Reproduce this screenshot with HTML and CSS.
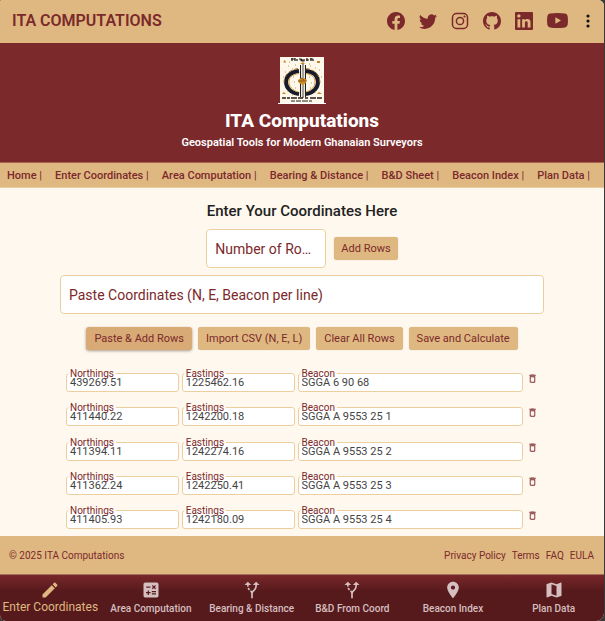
FILE: index.html
```html
<!DOCTYPE html>
<html lang="en">
<head>
<meta charset="utf-8">
<meta name="viewport" content="width=device-width, initial-scale=1">
<title>ITA Computations</title>
<link rel="stylesheet" href="styles.css">
</head>
<body>
<svg class="sprite" aria-hidden="true">
  <symbol id="trash" viewBox="0 0 24 24"><path d="M6 19c0 1.100.9 2 2 2h8c1.100 0 2-.9 2-2V7H6v12zM8 9h8v10H8V9zm7.500-5l-1-1h-5l-1 1H5v2h14V4h-3.500z"/></symbol>
  <symbol id="route" viewBox="0 0 24 24"><path d="m9.780 11.160-1.420 1.420c-.68-.69-1.340-1.580-1.790-2.940l1.940-.49c.32.89.77 1.500 1.270 2.010zM11 6 7 2 3 6h3.020c.02.81.08 1.540.19 2.170l1.940-.49C8.080 7.200 8.030 6.630 8.020 6H11zm10 0-4-4-4 4h2.990c-.1 3.680-1.280 4.750-2.540 5.880-.5.44-1.010.92-1.450 1.550-.34-.49-.73-.88-1.130-1.240L9.460 13.600c.93.85 1.540 1.540 1.540 3.400v5h2v-5c0-2.020.71-2.660 1.790-3.630 1.380-1.240 3.080-2.780 3.200-7.370H21z"/></symbol>
</svg>
<div class="app">
  <header class="topbar">
    <a class="brand" href="#">ITA COMPUTATIONS</a>
    <div class="social">
      <a href="#" aria-label="Facebook"><svg viewBox="0 0 16 16"><path d="M16 8.049c0-4.446-3.582-8.050-8-8.050C3.580 0-.002 3.603-.002 8.050c0 4.017 2.926 7.347 6.750 7.951v-5.625h-2.030V8.050H6.750V6.275c0-2.017 1.195-3.131 3.022-3.131.876 0 1.791.157 1.791.157v1.980h-1.009c-.993 0-1.303.621-1.303 1.258v1.510h2.218l-.354 2.326H9.250V16c3.824-.604 6.750-3.934 6.750-7.951"/></svg></a>
      <a href="#" aria-label="Twitter"><svg viewBox="0 0 16 16"><path d="M5.026 15c6.038 0 9.341-5.003 9.341-9.334q.002-.211-.006-.422A6.700 6.700 0 0 0 16 3.542a6.700 6.700 0 0 1-1.889.518 3.300 3.300 0 0 0 1.447-1.817 6.500 6.500 0 0 1-2.087.793A3.286 3.286 0 0 0 7.875 6.030a9.320 9.320 0 0 1-6.767-3.429 3.290 3.290 0 0 0 1.018 4.382A3.300 3.300 0 0 1 .64 6.575v.045a3.290 3.290 0 0 0 2.632 3.218 3.200 3.200 0 0 1-.865.115 3 3 0 0 1-.614-.057 3.280 3.280 0 0 0 3.067 2.277A6.600 6.600 0 0 1 .78 13.580a6 6 0 0 1-.78-.045A9.340 9.340 0 0 0 5.026 15"/></svg></a>
      <a href="#" aria-label="Instagram"><svg viewBox="0 0 18 18"><rect class="line" x="1.500" y="1.500" width="15" height="15" rx="4"/><circle class="line" cx="9" cy="9" r="3.600"/><circle cx="13.500" cy="4.500" r="1.100"/></svg></a>
      <a href="#" aria-label="GitHub"><svg viewBox="0 0 16 16"><path d="M8 0C3.580 0 0 3.580 0 8c0 3.540 2.290 6.530 5.470 7.590.4.070.55-.17.55-.38 0-.19-.01-.82-.01-1.490-2.010.37-2.530-.49-2.690-.94-.09-.23-.48-.94-.82-1.130-.28-.15-.68-.52-.01-.53.63-.01 1.080.58 1.230.82.72 1.210 1.870.87 2.330.66.07-.52.28-.87.51-1.070-1.780-.2-3.640-.89-3.640-3.950 0-.87.31-1.590.82-2.150-.08-.2-.36-1.020.08-2.120 0 0 .67-.21 2.200.82.64-.18 1.320-.27 2-.27s1.360.09 2 .27c1.530-1.040 2.200-.82 2.200-.82.44 1.100.16 1.920.08 2.120.51.56.82 1.270.82 2.150 0 3.070-1.870 3.750-3.650 3.950.29.25.54.73.54 1.480 0 1.070-.01 1.930-.01 2.200 0 .21.15.46.55.38A8.010 8.010 0 0 0 16 8c0-4.420-3.580-8-8-8"/></svg></a>
      <a href="#" aria-label="LinkedIn"><svg viewBox="3 3 18 18"><path fill-rule="evenodd" d="M20 3a1 1 0 0 1 1 1v16a1 1 0 0 1-1 1H4a1 1 0 0 1-1-1V4a1 1 0 0 1 1-1h16m-1.500 15.500v-5.300a3.260 3.260 0 0 0-3.260-3.260c-.85 0-1.840.52-2.320 1.300v-1.110h-2.790v8.370h2.790v-4.930c0-.77.62-1.400 1.390-1.400a1.400 1.400 0 0 1 1.400 1.400v4.930h2.790M6.880 8.560a1.680 1.680 0 0 0 1.680-1.680c0-.93-.75-1.690-1.680-1.690a1.690 1.690 0 0 0-1.690 1.690c0 .93.76 1.680 1.690 1.680m1.390 9.940v-8.370H5.500v8.370z"/></svg></a>
      <a class="wide" href="#" aria-label="YouTube"><svg viewBox="0 0 21 15"><path fill-rule="evenodd" d="M3 .6Q10.500-.6 18 .6q2.200.4 2.600 2.400.7 4.500 0 9-.4 2-2.600 2.400-7.500 1.200-15 0Q.8 14 .4 12q-.7-4.500 0-9Q.8 1 3 .6zM8.400 4.300v6.400l5.600-3.200z"/></svg></a>
    </div>
    <button class="more" type="button" aria-label="More options"><svg viewBox="0 0 4 14"><circle cx="2" cy="2" r="1.600"/><circle cx="2" cy="7" r="1.600"/><circle cx="2" cy="12" r="1.600"/></svg></button>
  </header>

  <section class="hero">
    <div class="logo">
      <svg viewBox="0 0 44 46" role="img" aria-label="Emblem">
        <rect width="44" height="46" fill="#fdf8ea"/>
        <path d="M12 1v3M11 2h4M15 1v3M17 2v2M19 2h2v2M22 2v2h2V2M26 3h3M27 1v3M30 2h3M31 1v3M33 2v2" stroke="#1b1815" stroke-width="1.200" fill="none"/>
        <g fill="none">
          <path d="M19 14C10 15 6 20 6 25s4 11 13 12" stroke="#171c2c" stroke-width="4"/>
          <path d="M26 14c9 1 12 6 12 11s-4 11-12 12" stroke="#171c2c" stroke-width="4"/>
          <path d="M19 16.500c-7 1-10 4-10 8.500s3 8 9 10" stroke="#d39a3c"/>
          <path d="M26 16.500c6 1 9 4 9 8.500s-3 8-9 10" stroke="#d39a3c"/>
          <path d="M18 11.500C8 13 4 19 4 26M26 11.500c10 1 14 8 14 15" stroke="#b37a28" stroke-dasharray="4 2"/>
          <path d="M20.500 8v32M25.500 8v32" stroke="#201d22"/>
          <path d="M23 7v34" stroke="#2b2730"/>
          <path d="M21.700 8v31M24.300 8v31" stroke="#efe6d2"/>
          <path d="M2 41h4m1 0h3m1 0h6m1 0h5m2 0h3m2 0h6m1 0h5" stroke="#25211c" stroke-width="1.500"/>
          <path d="M11 44h4m1 0h5m1 0h6m1 0h3" stroke="#25211c"/>
        </g>
        <path d="M18 23l3-2h3l3 2-1 3-3 2-4-2z" fill="#cf8d25"/>
        <path d="M18 24h8M21 21l3 2" stroke="#8a5618"/>
        <path d="M20 7h5l-2-2zM3 5l2-2 1 3zM37 4h3v2h-3zM2 37h4l-2-2zM37 37h5l-3-2z" fill="#c38629"/>
        <path d="M8 9h1M12 12h1M15 8h1M30 9h1M35 11h1M39 13h1M5 15h1M3 20h1M41 20h1M13 20h1M15 31h1M29 20h1M30 31h1M7 34h1M35 35h1M14 25h1M31 26h1M9 5h1M29 7h1M12 38h1" stroke="#c79a50"/>
      </svg>
    </div>
    <h1>ITA Computations</h1>
    <p>Geospatial Tools for Modern Ghanaian Surveyors</p>
  </section>

  <nav class="links" aria-label="Sections">
    <a href="#">Home <span>|</span></a>
    <a href="#">Enter Coordinates <span>|</span></a>
    <a href="#">Area Computation <span>|</span></a>
    <a href="#">Bearing &amp; Distance <span>|</span></a>
    <a href="#">B&amp;D Sheet <span>|</span></a>
    <a href="#">Beacon Index <span>|</span></a>
    <a href="#">Plan Data <span>|</span></a>
  </nav>

  <main>
    <h2>Enter Your Coordinates Here</h2>
    <div class="add">
      <input class="box count" type="text" aria-label="Number of Rows" placeholder="Number of Rows to add">
      <button class="btn" type="button">Add Rows</button>
    </div>
    <input class="box paste" type="text" aria-label="Paste Coordinates" placeholder="Paste Coordinates (N, E, Beacon per line)">
    <div class="actions">
      <button class="btn active" type="button">Paste &amp; Add Rows</button>
      <button class="btn" type="button">Import CSV (N, E, L)</button>
      <button class="btn" type="button">Clear All Rows</button>
      <button class="btn" type="button">Save and Calculate</button>
    </div>
    <div class="rows">
      <div class="row">
        <div class="field"><label for="n1">Northings</label><input id="n1" value="439269.51"></div>
        <div class="field"><label for="e1">Eastings</label><input id="e1" value="1225462.16"></div>
        <div class="field"><label for="b1">Beacon</label><input id="b1" value="SGGA 6 90 68"></div>
        <button class="del" type="button" aria-label="Delete row"><svg><use href="#trash"/></svg></button>
      </div>
      <div class="row">
        <div class="field"><label for="n2">Northings</label><input id="n2" value="411440.22"></div>
        <div class="field"><label for="e2">Eastings</label><input id="e2" value="1242200.18"></div>
        <div class="field"><label for="b2">Beacon</label><input id="b2" value="SGGA A 9553 25 1"></div>
        <button class="del" type="button" aria-label="Delete row"><svg><use href="#trash"/></svg></button>
      </div>
      <div class="row">
        <div class="field"><label for="n3">Northings</label><input id="n3" value="411394.11"></div>
        <div class="field"><label for="e3">Eastings</label><input id="e3" value="1242274.16"></div>
        <div class="field"><label for="b3">Beacon</label><input id="b3" value="SGGA A 9553 25 2"></div>
        <button class="del" type="button" aria-label="Delete row"><svg><use href="#trash"/></svg></button>
      </div>
      <div class="row">
        <div class="field"><label for="n4">Northings</label><input id="n4" value="411362.24"></div>
        <div class="field"><label for="e4">Eastings</label><input id="e4" value="1242250.41"></div>
        <div class="field"><label for="b4">Beacon</label><input id="b4" value="SGGA A 9553 25 3"></div>
        <button class="del" type="button" aria-label="Delete row"><svg><use href="#trash"/></svg></button>
      </div>
      <div class="row">
        <div class="field"><label for="n5">Northings</label><input id="n5" value="411405.93"></div>
        <div class="field"><label for="e5">Eastings</label><input id="e5" value="1242180.09"></div>
        <div class="field"><label for="b5">Beacon</label><input id="b5" value="SGGA A 9553 25 4"></div>
        <button class="del" type="button" aria-label="Delete row"><svg><use href="#trash"/></svg></button>
      </div>
    </div>
  </main>

  <footer>
    <span>© 2025 ITA Computations</span>
    <div class="legal"><a href="#">Privacy Policy</a><a href="#">Terms</a><a href="#">FAQ</a><a href="#">EULA</a></div>
  </footer>

  <nav class="tabs" aria-label="Main">
    <a class="current" href="#"><svg viewBox="0 0 24 24"><path d="M3 17.250V21h3.750L17.810 9.940l-3.750-3.750L3 17.250zM20.710 7.040c.39-.39.39-1.020 0-1.410l-2.340-2.340c-.39-.39-1.020-.39-1.410 0l-1.830 1.830 3.750 3.750 1.830-1.830z"/></svg><span>Enter Coordinates</span></a>
    <a href="#"><svg viewBox="0 0 24 24"><path fill-rule="evenodd" d="M5 3h14a2 2 0 0 1 2 2v14a2 2 0 0 1-2 2H5a2 2 0 0 1-2-2V5a2 2 0 0 1 2-2zM6.250 7.720v1.500h5v-1.500zM13 15.750v1.500h5v-1.500zm0-2.500v1.500h5v-1.500zM8 18h1.500v-2h2v-1.500h-2v-2H8v2H6V16h2zM14.090 10.950l1.410-1.410 1.410 1.410 1.060-1.060-1.410-1.420 1.410-1.410L16.910 6 15.500 7.410 14.090 6l-1.060 1.060 1.410 1.410-1.410 1.420z"/></svg><span>Area Computation</span></a>
    <a href="#"><svg><use href="#route"/></svg><span>Bearing &amp; Distance</span></a>
    <a href="#"><svg><use href="#route"/></svg><span>B&amp;D From Coord</span></a>
    <a href="#"><svg viewBox="0 0 24 24"><path d="M12 2C8.130 2 5 5.130 5 9c0 5.250 7 13 7 13s7-7.750 7-13c0-3.870-3.130-7-7-7zm0 9.500c-1.380 0-2.500-1.120-2.500-2.500s1.120-2.500 2.500-2.500 2.500 1.120 2.500 2.500-1.120 2.500-2.500 2.500z"/></svg><span>Beacon Index</span></a>
    <a href="#"><svg viewBox="0 0 24 24"><path d="M20.500 3l-.16.03L15 5.100 9 3 3.360 4.900c-.21.07-.36.25-.36.48V20.500c0 .28.22.5.5.5l.16-.03L9 18.900l6 2.100 5.640-1.900c.21-.07.36-.25.36-.48V3.500c0-.28-.22-.5-.5-.5zM15 19l-6-2.110V5l6 2.110V19z"/></svg><span>Plan Data</span></a>
  </nav>
</div>
</body>
</html>
```
FILE: styles.css
```css
:root {
  --maroon: #7b292b;
  --tan: #dfb881;
  --cream: #fff8ee;
  --outline: #edcf9f;
}
* { box-sizing: border-box; }
body {
  margin: 0;
  background: #3c3837;
  color: var(--maroon);
  font-family: Roboto, "Liberation Sans", sans-serif;
}
a { color: inherit; text-decoration: none; }
button, input { font: inherit; color: inherit; }
button { cursor: pointer; }
svg { display: block; fill: currentColor; }
.sprite { position: absolute; width: 0; height: 0; }

.app {
  display: flex;
  flex-direction: column;
  min-height: 100vh;
  margin-right: 1px;
  border-radius: 2px 6px 8px 6px;
  overflow: hidden;
  background: var(--cream);
}

.topbar {
  display: flex;
  align-items: center;
  height: 43px;
  padding: 0 12px 2px;
  background: var(--tan);
}
.brand { flex: 1; font-size: 16px; font-weight: 600; }
.social { display: flex; align-items: center; gap: 14px; }
.social svg { width: 18px; height: 18px; }
.social .wide svg { width: 21px; height: 15px; }
.line { fill: none; stroke: currentColor; stroke-width: 1.5; }
.more { margin-left: 16px; padding: 0 2px; border: 0; background: none; color: #111; }
.more svg { width: 4px; height: 14px; }

.hero {
  display: flex;
  flex-direction: column;
  align-items: center;
  height: 119px;
  padding-top: 14px;
  background: var(--maroon);
  color: #fff;
}
.logo { padding: 0 2px; border-bottom: 1px solid #fff; }
.logo svg { width: 44px; height: 46px; }
h1 { margin: 6px 0 0; font-size: 19px; line-height: 22px; font-weight: 800; }
.hero p { margin: 4px 0 0; font-size: 11px; line-height: 14px; font-weight: 600; }

.links {
  display: flex;
  justify-content: space-between;
  align-items: center;
  height: 26px;
  padding: 0 14px 0 7px;
  border-top: 1px solid #a9614c;
  border-bottom: 1px solid #e8cda2;
  background: var(--tan);
  font-size: 11px;
  font-weight: 500;
  white-space: nowrap;
}
.links span { font-weight: 400; }

main {
  flex: 1;
  display: flex;
  flex-direction: column;
  align-items: center;
  padding: 14px 60px 0;
}
h2 { margin: 0; font-size: 15px; line-height: 18px; font-weight: 500; color: #222; }
.add { display: flex; align-items: center; gap: 8px; margin-top: 9px; }
.box {
  height: 39px;
  padding: 0 8px;
  border: 1px solid var(--outline);
  border-radius: 4px;
  background: #fff;
  font-size: 14px;
  text-overflow: ellipsis;
}
.box::placeholder { color: var(--maroon); opacity: 1; }
.count { width: 120px; }
.paste { width: 100%; margin-top: 7px; }
.btn {
  height: 23px;
  padding: 0 7px;
  border: 0;
  border-radius: 3px;
  background: var(--tan);
  box-shadow: 0 0 1px #c9ad8d;
  font-size: 11px;
  white-space: nowrap;
}
.btn.active { background: #d8aa76; box-shadow: 0 1px 3px #a79a8b; }
.actions { display: flex; gap: 6px; margin-top: 13px; }
.actions .btn { padding: 0 8px; }

.rows {
  flex: 1;
  display: flex;
  flex-direction: column;
  justify-content: space-between;
  gap: 14px;
  width: 100%;
  padding: 23px 6px 7px;
}
.row { display: grid; grid-template-columns: 1fr 1fr 2fr 12px; gap: 3px; align-items: center; }
.field { position: relative; }
.field input {
  display: block;
  width: 100%;
  height: 19px;
  padding: 0 3px;
  border: 1px solid var(--outline);
  border-radius: 3px;
  background: #fff;
  color: #444;
  font-size: 11px;
}
.field label {
  position: absolute;
  left: 2px;
  top: -5px;
  padding: 0 2px;
  background: linear-gradient(var(--cream), var(--cream)) 0 5px / 100% 1px no-repeat;
  font-size: 10px;
  line-height: 12px;
}
.del { display: flex; justify-content: center; padding: 0 0 8px; border: 0; background: none; }
.del svg { width: 11px; height: 11px; }

footer {
  display: flex;
  justify-content: space-between;
  align-items: center;
  height: 38px;
  padding: 0 10px 0 9px;
  background: var(--tan);
  font-size: 10px;
}
.legal { display: flex; gap: 6px; }

.tabs {
  display: grid;
  grid-template-columns: repeat(6, 1fr);
  height: 47px;
  border-top: 1px solid #a57059;
  background: linear-gradient(#792729, #571a1c 16px);
  color: #d5bfc0;
  font-size: 10px;
  font-weight: 500;
  white-space: nowrap;
}
.tabs a { display: flex; flex-direction: column; align-items: center; padding-top: 5px; }
.tabs svg { width: 20px; height: 20px; }
.tabs span { margin-top: 2px; line-height: 14px; }
.tabs .current { color: var(--tan); font-size: 12px; font-weight: 400; }
.tabs .current span { margin-top: 0; }
```
